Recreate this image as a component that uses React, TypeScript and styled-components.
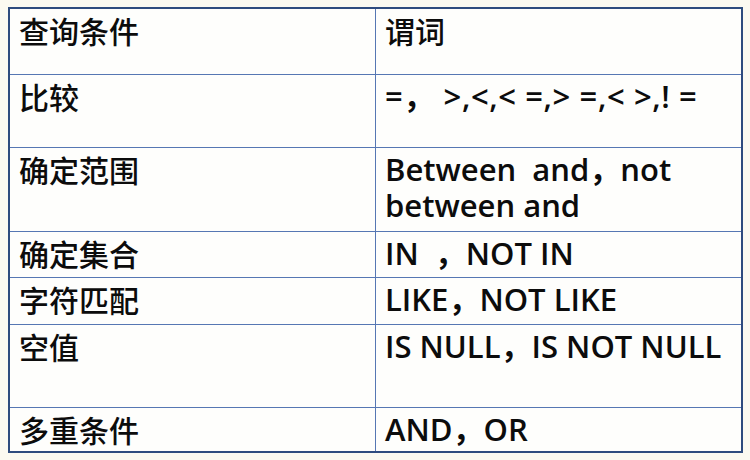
import React from "react";
import styled, { createGlobalStyle } from "styled-components";

const Global = createGlobalStyle`
  html, body { margin: 0; padding: 0; background: #fbfaf1; }
  body { width: 750px; height: 460px; overflow: hidden; }
`;

const Page = styled.div`
  padding: 7px 0 0 8px;
`;

const Table = styled.div`
  width: 735px;
  box-sizing: border-box;
  display: grid;
  grid-template-columns: 365px 365px;
  grid-template-rows: 65px 72px 83px 45px 46px 82px 43px;
  gap: 1px;
  background: #5677b3;
  border: 2px solid #2e4c7e;
`;

const Cell = styled.div<{ $latin?: boolean }>`
  background: #fefefc;
  color: #0c0c0c;
  white-space: pre-wrap;
  padding: ${(p) => (p.$latin ? "3px 6px 0 9px" : "3px 10px 0 9px")};
  font-family: ${(p) =>
    p.$latin
      ? `"Open Sans", "Noto Sans CJK SC", sans-serif`
      : `"Noto Sans CJK SC", sans-serif`};
  font-size: ${(p) => (p.$latin ? "31px" : "30px")};
  font-weight: ${(p) => (p.$latin ? 600 : 500)};
  line-height: ${(p) => (p.$latin ? "36px" : "36px")};
`;

const Ops = styled.span`
  letter-spacing: 0.6px;
`;

const rows: [string, React.ReactNode][] = [
  ["查询条件", "谓词"],
  ["比较", <Ops>{"=， >,<,< =,> =,< >,! ="}</Ops>],
  ["确定范围", "Between  and，not between and"],
  ["确定集合", "IN  ，NOT IN"],
  ["字符匹配", "LIKE，NOT LIKE"],
  ["空值", "IS NULL，IS NOT NULL"],
  ["多重条件", "AND，OR"],
];

export default function App() {
  return (
    <Page>
      <Global />
      <Table>
        {rows.map(([a, b], i) => (
          <React.Fragment key={i}>
            <Cell>{a}</Cell>
            <Cell $latin={i > 0}>{b}</Cell>
          </React.Fragment>
        ))}
      </Table>
    </Page>
  );
}
